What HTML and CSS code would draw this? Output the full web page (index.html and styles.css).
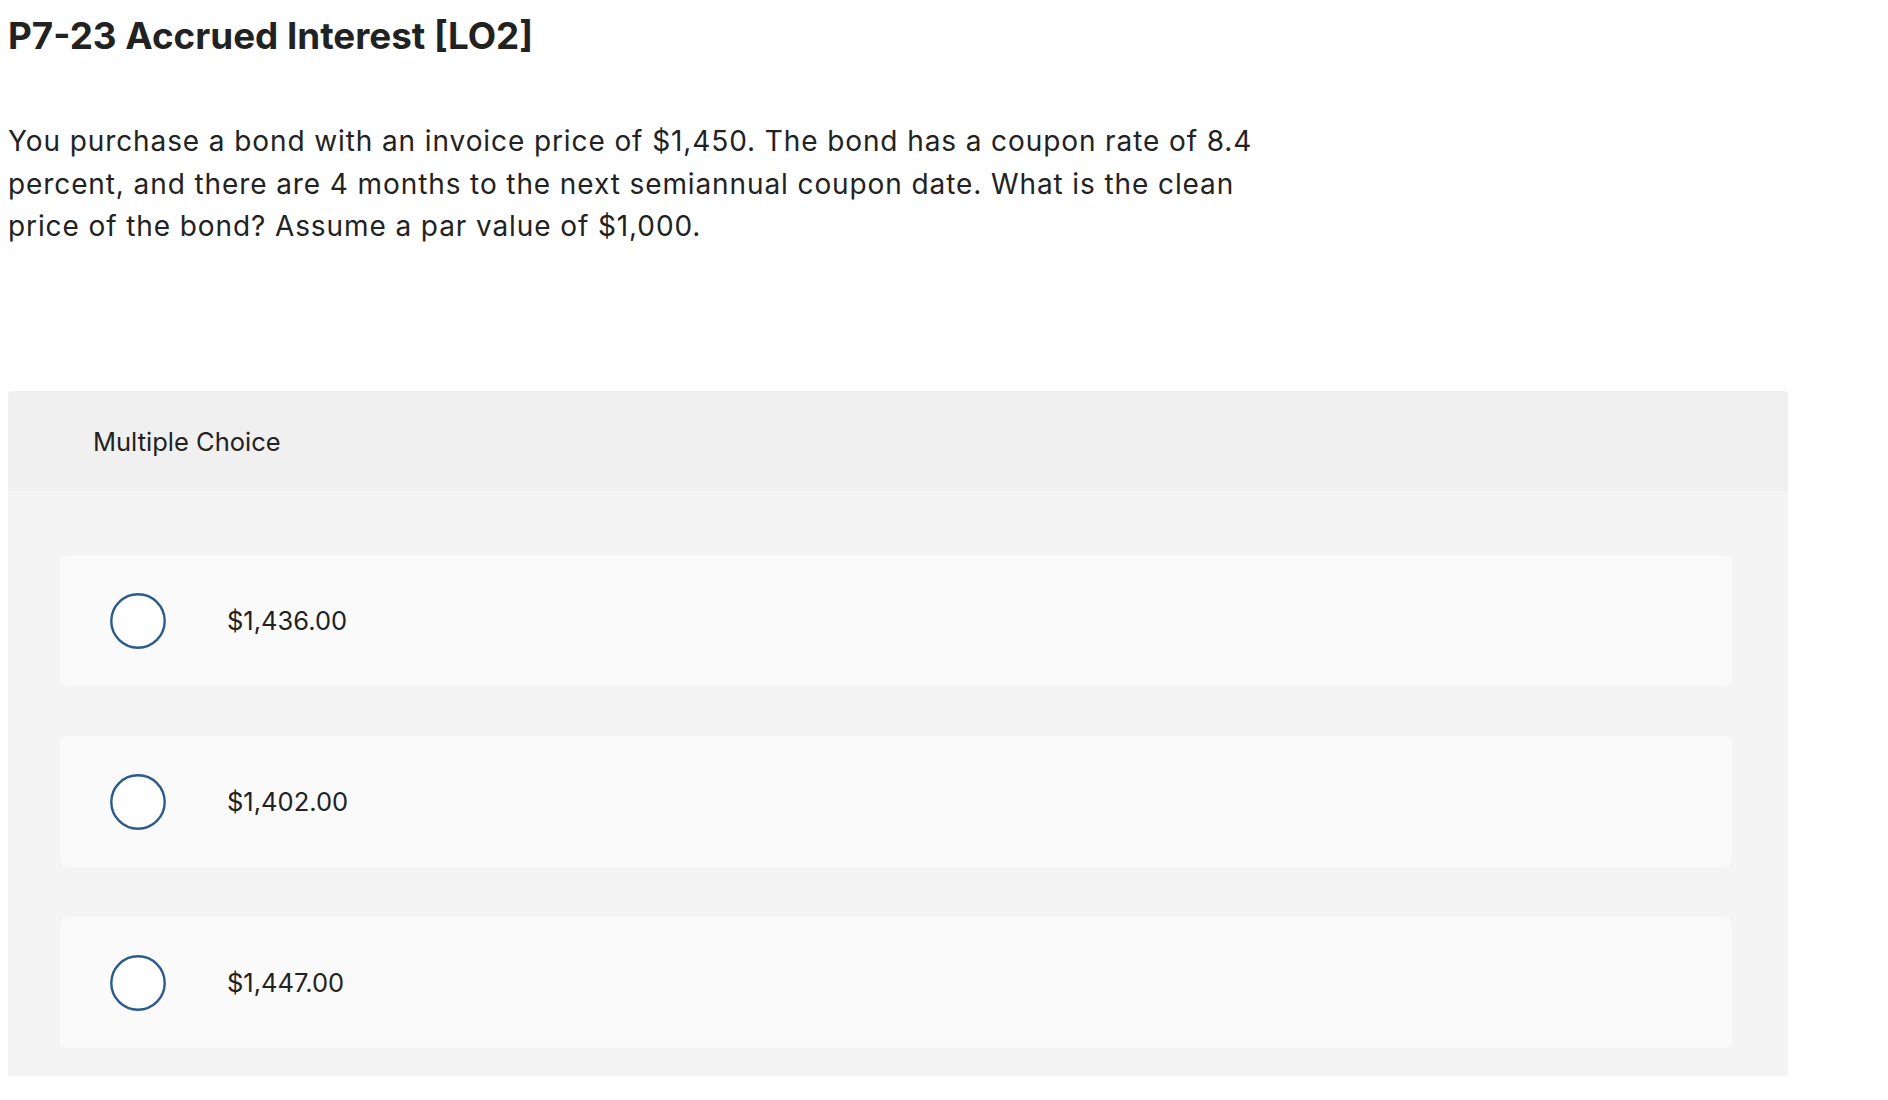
FILE: index.html
```html
<!DOCTYPE html>
<html lang="en">
<head>
<meta charset="utf-8">
<title>P7-23 Accrued Interest [LO2]</title>
<link rel="stylesheet" href="styles.css">
</head>
<body>
<main class="question">
  <h1 class="question-title">P7-23 Accrued Interest [LO2]</h1>
  <p class="question-text">You purchase a bond with an invoice price of $1,450. The bond has a coupon rate of 8.4 percent, and there are 4 months to the next semiannual coupon date. What is the clean price of the bond? Assume a par value of $1,000.</p>
  <section class="choices">
    <header class="choices-header">Multiple Choice</header>
    <div class="choices-body">
      <label class="choice">
        <span class="radio"><svg viewBox="0 0 56 56" width="56" height="56"><circle cx="28" cy="28" r="26.7" fill="#fff" stroke="#2b5a8e" stroke-width="2.4"/></svg></span>
        <span class="choice-text">$1,436.00</span>
      </label>
      <label class="choice">
        <span class="radio"><svg viewBox="0 0 56 56" width="56" height="56"><circle cx="28" cy="28" r="26.7" fill="#fff" stroke="#2b5a8e" stroke-width="2.4"/></svg></span>
        <span class="choice-text">$1,402.00</span>
      </label>
      <label class="choice">
        <span class="radio"><svg viewBox="0 0 56 56" width="56" height="56"><circle cx="28" cy="28" r="26.7" fill="#fff" stroke="#2b5a8e" stroke-width="2.4"/></svg></span>
        <span class="choice-text">$1,447.00</span>
      </label>
    </div>
  </section>
</main>
</body>
</html>
```

FILE: styles.css
```css
body {
  margin: 0;
  padding: 0 8px;
  background: #fff;
  color: #222;
  font-family: "Inter", "Open Sans", sans-serif;
}
.question-title {
  margin: 0;
  padding-top: 14px;
  font-size: 36.8px;
  line-height: 44px;
  font-weight: 700;
  color: #222;
}
.question-text {
  margin: 0;
  padding-top: 62px;
  width: 1270px;
  font-size: 28px;
  line-height: 42.7px;
  letter-spacing: 0.9px;
}
.choices {
  margin-top: 143px;
  width: 1780px;
  background: #f4f4f4;
  border-radius: 4px 4px 0 0;
}
.choices-header {
  height: 100px;
  display: flex;
  align-items: center;
  padding-left: 85px;
  background: #f0f0f0;
  border-radius: 4px 4px 0 0;
  font-size: 25.5px;
}
.choices-body {
  display: flex;
  flex-direction: column;
  gap: 50px;
  padding: 64px 56px 28px 52px;
}
.choice {
  height: 131px;
  display: flex;
  align-items: center;
  padding-left: 50px;
  background: #fafafa;
  border-radius: 7px;
}
.radio {
  width: 56px;
  height: 56px;
  display: block;
}
.radio svg { display: block; }
.choice-text {
  margin-left: 61px;
  font-size: 25.5px;
}
```
